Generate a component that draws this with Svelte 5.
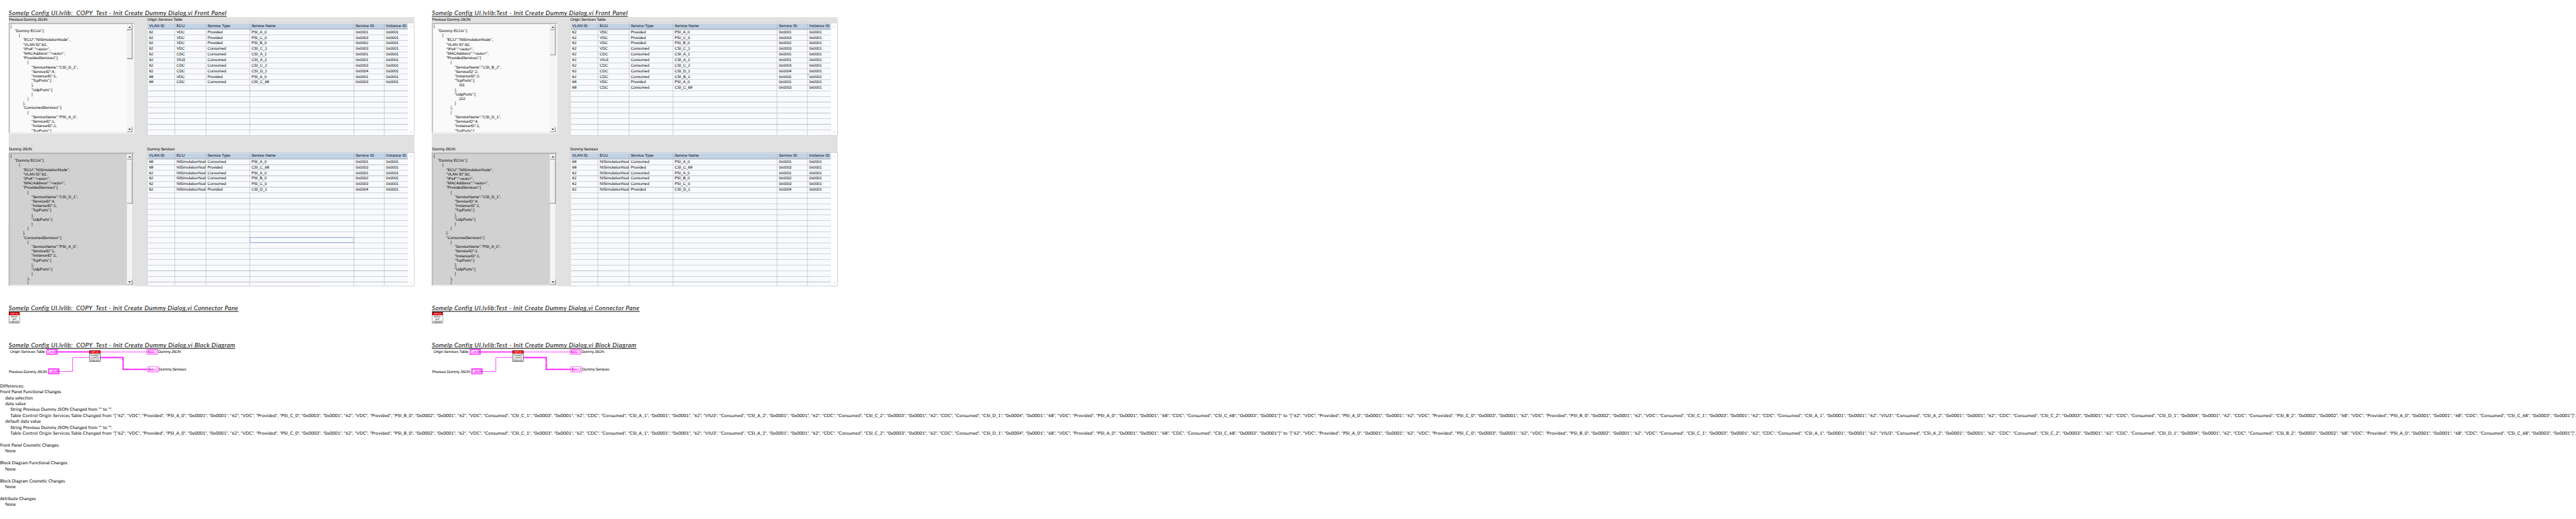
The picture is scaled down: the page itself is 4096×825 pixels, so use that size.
<script>
  const SCALE = 4096 / 7390;

  // Spreads or tightens the letters of a text so that it fills the given width.
  function fit(node, width) {
    if (!width) return;
    const natural = node.getBoundingClientRect().width / SCALE;
    node.style.letterSpacing = (width - natural) / node.textContent.length + 'px';
  }

  const columns = [
    { name: 'VLAN ID', w: 43 },
    { name: 'ECU', w: 22.5 },
    { name: 'Service Type', w: 63 },
    { name: 'Service Name', w: 67 },
    { name: 'Service ID', w: 50.5 },
    { name: 'Instance ID', w: 56 }
  ];

  const row = (line) => line.split(' ');
  const originOld = [
    '62 VDC Provided PSI_A_0 0x0001 0x0001',
    '62 VDC Provided PSI_C_0 0x0003 0x0001',
    '62 VDC Provided PSI_B_0 0x0002 0x0001',
    '62 VDC Consumed CSI_C_1 0x0003 0x0001',
    '62 CDC Consumed CSI_A_1 0x0001 0x0001',
    '62 VIU3 Consumed CSI_A_2 0x0001 0x0001',
    '62 CDC Consumed CSI_C_2 0x0003 0x0001',
    '62 CDC Consumed CSI_D_1 0x0004 0x0001',
    '68 VDC Provided PSI_A_0 0x0001 0x0001',
    '68 CDC Consumed CSI_C_68 0x0003 0x0001'
  ].map(row);
  const originNew = [
    ...originOld.slice(0, 8),
    row('62 CDC Consumed CSI_B_2 0x0002 0x0002'),
    ...originOld.slice(8)
  ];
  const dummyRows = [
    '68 NISimulationNode Consumed PSI_A_0 0x0001 0x0001',
    '68 NISimulationNode Provided CSI_C_68 0x0003 0x0001',
    '62 NISimulationNode Consumed PSI_A_0 0x0001 0x0001',
    '62 NISimulationNode Consumed PSI_B_0 0x0002 0x0001',
    '62 NISimulationNode Consumed PSI_C_0 0x0003 0x0001',
    '62 NISimulationNode Provided CSI_D_1 0x0004 0x0001'
  ].map(row);

  const pad = (rows, n) => Array.from({ length: n }, (_, i) => rows[i] ?? ['', '', '', '', '', '']);

  const head = `{
    "Dummy ECUs":[
        {
            "ECU":"NISimulationNode",
            "VLAN ID":62,
            "IPv4":"<auto>",
            "MACAddress":"<auto>",
            "ProvidedServices":[
                {
`;
  const jsonDummy = head + `                    "ServiceName":"CSI_D_1",
                    "ServiceID":4,
                    "InstanceID":1,
                    "TcpPorts":[
                    ],
                    "UdpPorts":[
                    ]
                }
            ],
            "ConsumedServices":[
                {
                    "ServiceName":"PSI_A_0",
                    "ServiceID":1,
                    "InstanceID":1,
                    "TcpPorts":[
                    ],
                    "UdpPorts":[
                    ]
                },
                {`;
  const jsonPreviousOld = jsonDummy.split('\n').slice(0, 24).join('\n');
  const jsonPreviousNew = head + `                    "ServiceName":"CSI_B_2",
                    "ServiceID":2,
                    "InstanceID":2,
                    "TcpPorts":[
                        111
                    ],
                    "UdpPorts":[
                        222
                    ]
                },
                {
                    "ServiceName":"CSI_D_1",
                    "ServiceID":4,
                    "InstanceID":1,
                    "TcpPorts":[`;

  const versions = [
    {
      name: 'SomeIp Config UI.lvlib:  COPY  Test - Init Create Dummy Dialog.vi',
      w: [625, 658.5, 650],
      panes: [
        { label: 'Previous Dummy JSON', lw: 110, json: jsonPreviousOld, h: 317, thumb: 82, dim: false },
        { label: 'Dummy JSON', lw: 66, json: jsonDummy, h: 383, thumb: 125, dim: true }
      ],
      tables: [
        { label: 'Origin Services Table', lw: 101.5, rows: pad(originOld, 19), h: 323.5, mark: '0-3' },
        { label: 'Dummy Services', lw: 79, rows: pad(dummyRows, 23), h: 384, sel: '14-3' }
      ]
    },
    {
      name: 'SomeIp Config UI.lvlib:Test - Init Create Dummy Dialog.vi',
      w: [562, 595.5, 586.5],
      panes: [
        { label: 'Previous Dummy JSON', lw: 110, json: jsonPreviousNew, h: 317, thumb: 71, dim: false },
        { label: 'Dummy JSON', lw: 66, json: jsonDummy, h: 383, thumb: 125, dim: true }
      ],
      tables: [
        { label: 'Origin Services Table', lw: 101.5, rows: pad(originNew, 19), h: 323.5, mark: '8-5' },
        { label: 'Dummy Services', lw: 79, rows: pad(dummyRows, 23), h: 384, mark: '5-3' }
      ]
    }
  ];

  const flat = (rows) => '"[' + rows.flat().map((v) => `"${v}"`).join(', ') + ']"';
  const tableChange = `Table Control Origin Services Table Changed from ${flat(originOld)} to ${flat(originNew)}.`;
  const stringChange = 'String Previous Dummy JSON Changed from "" to "".';
  const differences = [
    [0, 'Differences:', 68.5],
    [0, 'Front Panel Functional Changes', 175.5],
    [1, 'data selection', 79.5],
    [1, 'data value', 59],
    [2, stringChange, 292],
    [2, tableChange, 7359.5],
    [1, 'default data value', 102.5],
    [2, stringChange, 292],
    [2, tableChange, 7359.5],
    [0, '', 0],
    [0, 'Front Panel Cosmetic Changes', 168.5],
    [1, 'None', 30],
    [0, '', 0],
    [0, 'Block Diagram Functional Changes', 193.5],
    [1, 'None', 30],
    [0, '', 0],
    [0, 'Block Diagram Cosmetic Changes', 186.5],
    [1, 'None', 30],
    [0, '', 0],
    [0, 'Attribute Changes', 102.5],
    [1, 'None', 30]
  ];
</script>

{#snippet title(text, width)}
  <h2><span class="clip"><span class="name" use:fit={width}>{text}</span></span></h2>
{/snippet}

{#snippet viIcon(lines)}
  <rect width="32" height="32" fill="#000" />
  <rect x="1" y="1" width="30" height="7.3" fill="#f00" />
  <rect x="1" y="9" width="30" height="22" fill="#fff" />
  <text class="pix" x="6" y="7" fill="#fff" textLength="20" lengthAdjust="spacingAndGlyphs">SIP UI</text>
  {#each lines as [t, w], i}
    <text class="pix" x={(t === 'TEST-' ? 16 : 16.2) - w / 2} y={16 + i * 7} fill="#000" textLength={w} lengthAdjust="spacingAndGlyphs">{t}</text>
  {/each}
{/snippet}

{#snippet terminal(x, y, control, array)}
  <g transform="translate({x} {y})">
    <rect width="32" height="16" fill="#f0f" />
    {#if control}
      <rect x="2" y="2" width="28" height="12" fill="#fff" />
    {:else}
      <rect x="1" y="1" width="30" height="14" fill="#fff" />
    {/if}
    {#if array}
      <path d={control ? 'M7.5 3.5H5.5V12.5H7.5M26 3.5H28V12.5H26' : 'M6 3.5H4V12.5H6M25 3.5H27.5V12.5H25'} fill="none" stroke="#f0f" stroke-width="1.4" />
    {:else}
      <rect x="3.5" y="3.5" width="25" height="9" fill="none" stroke="#f0f" />
    {/if}
    <rect x={control ? 22 : 3} y="2.5" width="7" height="11" fill="#f9f" />
    <text class="abc" x={control ? 8 : 7.5} y="11" fill="#f0f" textLength="17" lengthAdjust="spacingAndGlyphs">abc</text>
    <path d={control ? 'M27 5L30 8L27 11Z' : 'M3.5 5L6.5 8L3.5 11Z'} fill="#444" />
  </g>
{/snippet}

<div class="page">
  <main>
    <div class="versions">
      {#each versions as v}
        <section>
          {@render title(v.name + ' Front Panel', v.w[0])}
          <div class="panel">
            <div class="left">
              {#each v.panes as p}
                <div class="block">
                  <div class="label tall"><span use:fit={p.lw}>{p.label}</span></div>
                  <div class="json" class:dim={p.dim} style="height:{p.h}px">
                    <pre>{p.json}</pre>
                    <div class="bar">
                      <div class="btn"><svg width="8" height="4" viewBox="0 0 8 4"><path d="M0 4L4 0L8 4Z" /></svg></div>
                      <div class="thumb" style="height:{p.thumb}px"></div>
                      <div class="btn end"><svg width="8" height="4" viewBox="0 0 8 4"><path d="M0 0L4 4L8 0Z" /></svg></div>
                    </div>
                  </div>
                </div>
              {/each}
            </div>
            <div class="right">
              {#each v.tables as t}
                <div class="block">
                  <div class="label"><span use:fit={t.lw}>{t.label}</span></div>
                  <div class="table" style="height:{t.h}px">
                    <div class="grid">
                      <div class="row header">
                        {#each columns as c}<div class="cell"><span use:fit={c.w}>{c.name}</span></div>{/each}
                      </div>
                      {#each t.rows as r, i}
                        <div class="row">
                          {#each r as value, j}
                            <div class="cell" class:sel={t.sel === i + '-' + j} class:mark={t.mark === i + '-' + j}><span use:fit={value === 'NISimulationNode' ? 86 : 0}>{value}</span></div>
                          {/each}
                        </div>
                      {/each}
                    </div>
                    <div class="gutter">
                      <svg width="8" height="6" viewBox="0 0 8 6"><path d="M0 6L4 0L8 6Z" /></svg>
                      <svg width="8" height="6" viewBox="0 0 8 6"><path d="M0 0L4 6L8 0Z" /></svg>
                    </div>
                  </div>
                </div>
              {/each}
            </div>
          </div>

          <div class="pane">
            {@render title(v.name + ' Connector Pane', v.w[1])}
            <svg width="32" height="32" viewBox="0 0 32 32">
              {@render viIcon([['TEST-', 21], ['INIT', 12], ['CREATE', 26.5]])}
            </svg>
          </div>

          <div class="diagram">
            {@render title(v.name + ' Block Diagram', v.w[2])}
            <svg width="540" height="73" viewBox="0 0 540 73">
              <g fill="none" stroke="#f0f">
                <path class="wide" d="M140 8.4H231M263 24.4H328V58.4H398" />
                <path class="core" d="M140 8.4H231M263 24.4H328V58.4H398" />
                <path class="thin" d="M263 8.4H396M145 64.4H183.5V24.4H231" />
              </g>
              <text class="ui" x="4" y="12" textLength="101">Origin Services Table</text>
              <text class="ui" x="0.5" y="68" textLength="109.5">Previous Dummy JSON</text>
              <text class="ui" x="428.8" y="12" textLength="65.5">Dummy JSON</text>
              <text class="ui" x="430.8" y="62" textLength="78.5">Dummy Services</text>
              {@render terminal(108.3, 0, true, true)}
              {@render terminal(113.2, 56, true, false)}
              {@render terminal(396, 0, false, false)}
              {@render terminal(398.2, 50, false, true)}
              <g transform="translate(231 4)">
                {@render viIcon([['DUMMY', 26], ['CONFIG', 26], ['DIALOG', 26]])}
              </g>
            </svg>
          </div>
        </section>
      {/each}
    </div>

    <div class="differences">
      {#each differences as [depth, text, width]}
        <div class="line d{depth}"><span use:fit={width}>{text}</span></div>
      {/each}
    </div>
  </main>
</div>

<style>
  :global(body) { margin: 0; background: #fff; overflow: hidden; }
  .page { width: 4096px; height: 825px; overflow: hidden; background: #fff; }
  /* The slight turn keeps the small glyphs from being snapped to whole pixels. */
  main {
    box-sizing: border-box;
    width: 7390px;
    height: 1489px;
    padding-top: 28px;
    transform: scale(0.554263) rotate(0.001deg);
    transform-origin: 0 0;
    color: #000;
    text-rendering: geometricPrecision;
  }
  .versions { display: flex; gap: 50px; padding-left: 25px; }
  section { width: 1164px; }
  h2 {
    margin: 0 0 1px;
    height: 20px;
    display: flex;
    font: italic 400 17.9px/18px Lato, sans-serif;
    white-space: pre;
  }
  .clip { height: 18px; overflow: hidden; border-bottom: 2px solid #000; }
  .name { display: inline-block; vertical-align: top; }

  .panel {
    display: flex;
    justify-content: space-between;
    height: 772px;
    background: #e1e1e1;
    font: 11.3px/15px "Liberation Sans", Arial, sans-serif;
  }
  .left, .right { display: flex; flex-direction: column; justify-content: space-between; }
  .left { width: 360px; }
  .right { width: 767.5px; }
  .label { height: 16px; line-height: 16px; white-space: nowrap; padding-left: 0.5px; }
  .label.tall { height: 17px; }

  .json {
    box-sizing: border-box;
    display: flex;
    padding-right: 3px;
    border: solid;
    border-width: 3px 2px 4px 3.5px;
    border-color: #afafaf #f0f0f0 #efefef #b4b4b4;
    background: #fafafa;
  }
  .json.dim { background: #d1d1d1; }
  pre {
    flex: 1;
    margin: 1px 0 0;
    padding-left: 2px;
    height: calc(100% - 2px);
    overflow: hidden;
    font: 11.3px/13px "Liberation Sans", Arial, sans-serif;
    letter-spacing: -0.12px;
  }
  .bar {
    width: 16px;
    margin: 1px 0 0;
    display: flex;
    flex-direction: column;
    gap: 1px;
    background: #f5f5f5;
  }
  .btn, .thumb {
    box-sizing: border-box;
    background: #f0f0f0;
    border: 1px solid #e3e3e3;
    border-right-color: #696969;
    border-bottom-color: #696969;
    box-shadow: inset -1px -1px #a0a0a0, inset 1px 1px #fff;
  }
  .btn { height: 15.5px; display: flex; align-items: center; justify-content: center; }
  .btn.end { margin-top: auto; }

  .table {
    box-sizing: border-box;
    display: flex;
    padding: 1px 0 1px 1px;
    border: 1px solid #a5a8ab;
    background: #fff;
  }
  .grid { width: 746.5px; overflow: hidden; background: #f8fafd; }
  .row {
    box-sizing: border-box;
    display: grid;
    grid-template-columns: 78.5px 89px 126px 299px 87px 67px;
    height: 16px;
    border-bottom: 1px solid #a5a8ab;
  }
  .row:last-child { border-bottom: 0; }
  .row.header {
    height: 18px;
    border-bottom: 3px double #a5a8ab;
    background: #c2d3e6;
  }
  .cell {
    overflow: hidden;
    padding-left: 4.5px;
    border-right: 1px solid #a5a8ab;
    white-space: nowrap;
    letter-spacing: -0.2px;
  }
  .cell:first-child { padding-left: 4px; }
  .cell:last-child { border-right-color: #e6e8ea; }
  .cell.sel { box-shadow: inset 0 0 0 1px #4a7fd6; }
  .cell.mark { background: linear-gradient(#4a7fd6, #4a7fd6) 0 0 / 3px 1px no-repeat, linear-gradient(#4a7fd6, #4a7fd6) 0 0 / 1px 3px no-repeat; }
  .gutter {
    flex: 1;
    display: flex;
    flex-direction: column;
    justify-content: space-between;
    align-items: center;
    padding: 6px 0 4px;
    fill: #e3e3e3;
  }

  .pane { margin-top: 53px; height: 53px; }
  .pane svg, .diagram svg { display: block; }
  .diagram { margin-top: 53px; }
  .pix { font: 400 7px "Liberation Sans", Arial, sans-serif; }
  .abc { font: 700 10px "Liberation Serif", serif; }
  .ui { font: 11.3px "Liberation Sans", Arial, sans-serif; }
  .wide { stroke-width: 4; stroke-dasharray: 1.4 0.6; }
  .core { stroke-width: 2; stroke-opacity: 0.45; }
  .thin { stroke-width: 1.8; stroke-dasharray: 2.4 0.8; }

  .differences { margin-top: 23.7px; font: 12.7px/17px Lato, sans-serif; }
  .line { height: 17px; white-space: nowrap; }
  .d1 { padding-left: 15px; }
  .d2 { padding-left: 30px; }
</style>
